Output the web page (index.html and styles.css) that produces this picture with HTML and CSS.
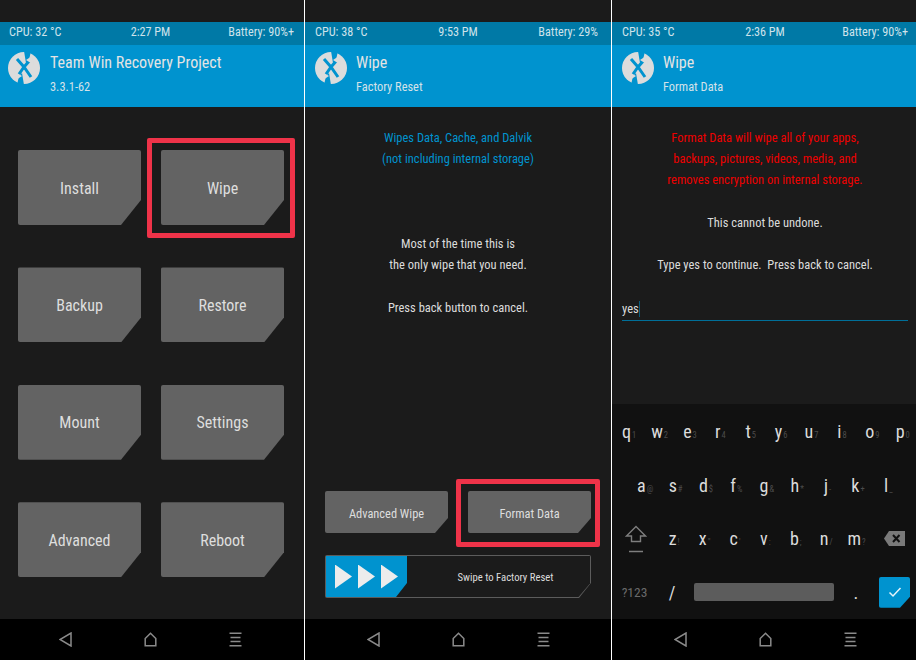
FILE: index.html
```html
<!DOCTYPE html>
<html lang="en">
<head>
  <meta charset="UTF-8" />
  <title>TWRP</title>
  <link rel="stylesheet" href="styles.css">
</head>
<body>
  <div class="screens">

    <section class="panel panel-a">
      <div class="statusbar"><span>CPU: 32 °C</span><span class="clock">2:27 PM</span><span>Battery: 90%+</span></div>
      <header class="titlebar">
        <svg class="logo" viewBox="0 0 32 32"><use href="#twrp"/></svg>
        <div><h1>Team Win Recovery Project</h1><p>3.3.1-62</p></div>
      </header>
      <div class="content main-grid">
        <button class="btn big">Install</button>
        <button class="btn big">Wipe</button>
        <button class="btn big">Backup</button>
        <button class="btn big">Restore</button>
        <button class="btn big">Mount</button>
        <button class="btn big">Settings</button>
        <button class="btn big">Advanced</button>
        <button class="btn big">Reboot</button>
        <div class="mark mark-wipe"></div>
      </div>
      <nav class="navbar">
        <svg viewBox="0 0 13 15"><path d="M12 1V14L1 7.5Z"/></svg>
        <svg viewBox="0 0 13 15"><path d="M1.2 13.8V6.5L6.5 1.2L11.8 6.5V13.8Z"/></svg>
        <svg viewBox="0 0 13 15"><path d="M0.5 1.2H12.5M1.5 5.5H11.5M1.5 9.5H11.5M0.5 13.8H12.5"/></svg>
      </nav>
    </section>

    <section class="panel panel-b">
      <div class="statusbar"><span>CPU: 38 °C</span><span class="clock">9:53 PM</span><span>Battery: 29%</span></div>
      <header class="titlebar">
        <svg class="logo" viewBox="0 0 32 32"><use href="#twrp"/></svg>
        <div><h1>Wipe</h1><p>Factory Reset</p></div>
      </header>
      <div class="content wipe">
        <p class="blue">Wipes Data, Cache, and Dalvik<br>(not including internal storage)</p>
        <p class="gap3">Most of the time this is<br>the only wipe that you need.</p>
        <p class="gap1">Press back button to cancel.</p>
        <div class="wipe-actions">
          <div class="btn-row">
            <button class="btn small">Advanced Wipe</button>
            <button class="btn small">Format Data</button>
          </div>
          <div class="slider">
            <div class="slider-inner">
              <div class="slider-thumb"><i></i><i></i><i></i></div>
              <span>Swipe to Factory Reset</span>
            </div>
          </div>
        </div>
        <div class="mark mark-format"></div>
      </div>
      <nav class="navbar">
        <svg viewBox="0 0 13 15"><path d="M12 1V14L1 7.5Z"/></svg>
        <svg viewBox="0 0 13 15"><path d="M1.2 13.8V6.5L6.5 1.2L11.8 6.5V13.8Z"/></svg>
        <svg viewBox="0 0 13 15"><path d="M0.5 1.2H12.5M1.5 5.5H11.5M1.5 9.5H11.5M0.5 13.8H12.5"/></svg>
      </nav>
    </section>

    <section class="panel panel-c">
      <div class="statusbar"><span>CPU: 35 °C</span><span class="clock">2:36 PM</span><span>Battery: 90%+</span></div>
      <header class="titlebar">
        <svg class="logo" viewBox="0 0 32 32"><use href="#twrp"/></svg>
        <div><h1>Wipe</h1><p>Format Data</p></div>
      </header>
      <div class="content format">
        <p class="red">Format Data will wipe all of your apps,<br>backups, pictures, videos, media, and<br>removes encryption on internal storage.</p>
        <p class="gap1">This cannot be undone.</p>
        <p class="gap1">Type yes to continue.&nbsp; Press back to cancel.</p>
        <div class="field">yes<i class="caret"></i></div>
      </div>
      <div class="keyboard">
        <div class="kb-row top">
          <span class="key">q<sub>1</sub></span><span class="key">w<sub>2</sub></span><span class="key">e<sub>3</sub></span><span class="key">r<sub>4</sub></span><span class="key">t<sub>5</sub></span><span class="key">y<sub>6</sub></span><span class="key">u<sub>7</sub></span><span class="key">i<sub>8</sub></span><span class="key">o<sub>9</sub></span><span class="key">p<sub>0</sub></span>
        </div>
        <div class="kb-row indent">
          <span class="key">a<sub>@</sub></span><span class="key">s<sub>#</sub></span><span class="key">d<sub>$</sub></span><span class="key">f<sub>%</sub></span><span class="key">g<sub>&amp;</sub></span><span class="key">h<sub>*</sub></span><span class="key">j<sub>-</sub></span><span class="key">k<sub>+</sub></span><span class="key">l<sub>_</sub></span>
        </div>
        <div class="kb-row">
          <span class="key side shift-key">
            <svg class="shift" viewBox="0 0 22 28"><path d="M11 1.5L20.5 11H15.5V16.5H6.5V11H1.5Z M4 26.5H18"/></svg>
          </span>
          <span class="key">z<sub>!</sub></span><span class="key">x<sub>"</sub></span><span class="key">c<sub>'</sub></span><span class="key">v<sub>:</sub></span><span class="key">b<sub>;</sub></span><span class="key">n<sub>/</sub></span><span class="key">m<sub>?</sub></span>
          <span class="key side">
            <svg class="bksp" viewBox="0 0 21 15"><path class="bksp-body" d="M5 0H21V15H5L0 7.5Z"/><path class="bksp-x" d="M9 4L15.5 11M15.5 4L9 11"/></svg>
          </span>
        </div>
        <div class="kb-row">
          <span class="key side sym">?123</span>
          <span class="key">/</span>
          <span class="spacebar"></span>
          <span class="key">.</span>
          <span class="enter">
            <svg viewBox="0 0 14 12"><path d="M1.5 6.5L5 10L12.5 2"/></svg>
          </span>
        </div>
      </div>
      <nav class="navbar">
        <svg viewBox="0 0 13 15"><path d="M12 1V14L1 7.5Z"/></svg>
        <svg viewBox="0 0 13 15"><path d="M1.2 13.8V6.5L6.5 1.2L11.8 6.5V13.8Z"/></svg>
        <svg viewBox="0 0 13 15"><path d="M0.5 1.2H12.5M1.5 5.5H11.5M1.5 9.5H11.5M0.5 13.8H12.5"/></svg>
      </nav>
    </section>

  </div>

  <svg class="defs" width="0" height="0">
    <symbol id="twrp" viewBox="0 0 32 32">
      <circle cx="16" cy="16" r="16" fill="#dcdcdc"/>
      <path d="M16 -1H23L21 8L18 11Z M9 33H16L14 21L11 24Z" fill="#0093cf"/>
      <path d="M9 7L16 15L23 25M23 7L16 15L9 25" stroke="#0093cf" stroke-width="3" fill="none"/>
      <path d="M24 4L26 13L18 8Z M8 28L6 19L14 24Z" fill="#dcdcdc"/>
    </symbol>
  </svg>
</body>
</html>
```

FILE: styles.css
```css
* { box-sizing: border-box; }
html, body { margin: 0; height: 100%; }
body {
  background: #fff;
  font-family: Roboto, "Liberation Sans", sans-serif;
  font-stretch: 75%;
  overflow: hidden;
}
.defs { position: absolute; }
.screens {
  display: grid;
  grid-template-columns: 304px 306px 304px;
  column-gap: 1px;
  height: 660px;
  width: 916px;
}
.panel {
  display: flex;
  flex-direction: column;
  background: #1b1b1b;
  padding-top: 22px;
  height: 660px;
  position: relative;
}

.statusbar {
  height: 23px;
  background: #0079a6;
  color: #cfe3eb;
  font-size: 12.2px;
  display: flex;
  align-items: center;
  justify-content: space-between;
  padding: 0 10px 3px 9px;
}
.clock { position: absolute; left: 0; right: 0; text-align: center; }
.panel-a .clock { padding-right: 3px; }
.panel-b .statusbar { padding: 0 13px 3px 10px; }
.panel-c .statusbar { padding: 0 8px 3px 10px; }
.panel-c .clock { padding-left: 2px; }

.titlebar {
  height: 62px;
  background: #0093cf;
  color: #e4e4e4;
  display: flex;
  padding: 7px 0 0 10px;
  gap: 9px;
}
.panel-a .titlebar { padding-left: 8px; gap: 10px; }
.logo { width: 32px; height: 32px; }
.titlebar h1 { font-size: 16px; font-weight: 400; margin: 1px 0 0; line-height: 20px; }
.titlebar p { font-size: 12.4px; margin: 6px 0 0; line-height: 15px; color: #d4e2e9; }

.content { flex: 1; position: relative; }

.btn {
  display: block;
  border: none;
  background: #636363;
  color: #dedede;
  font-family: inherit;
  font-stretch: inherit;
  width: 123px;
  border-radius: 2px;
  padding: 0;
}
.big {
  height: 75px;
  padding-top: 1px;
  font-size: 16px;
  clip-path: polygon(0 0, 100% 0, 100% 50px, 103px 100%, 0 100%);
}
.small {
  height: 42px;
  padding-top: 2px;
  font-size: 12.4px;
  clip-path: polygon(0 0, 100% 0, 100% 27px, 110px 100%, 0 100%);
}

.main-grid {
  display: grid;
  grid-template-columns: 123px 123px;
  grid-auto-rows: 75px;
  column-gap: 20px;
  row-gap: 42.4px;
  padding: 43px 0 0 18px;
}

.mark {
  position: absolute;
  border: 5px solid #ef3349;
  border-radius: 2px;
}
.mark-wipe { left: 147px; top: 31px; width: 148px; height: 100px; }
.mark-format { left: 151px; top: 372px; width: 144px; height: 68px; }

.wipe, .format {
  font-size: 12.5px;
  line-height: 21.3px;
  color: #dcdcdc;
  text-align: center;
  padding-top: 19.5px;
}
.wipe p, .format p { margin: 0; }
.blue { color: #0093cf; }
.red { color: #ee0000; }
.gap1 { padding-top: 21.3px; }
.gap3 { padding-top: 63.9px; }

.wipe-actions {
  position: absolute;
  left: 20px;
  top: 384px;
  width: 266px;
}
.btn-row { display: flex; gap: 20px; }
.slider {
  margin-top: 22px;
  height: 43px;
  background: #5c5c5c;
  border-radius: 2px;
  clip-path: polygon(0 0, 100% 0, 100% 28px, 254px 100%, 0 100%);
  padding: 1px;
}
.slider-inner {
  height: 100%;
  background: #1b1b1b;
  clip-path: polygon(0 0, 100% 0, 100% 27.5px, 252.5px 100%, 0 100%);
  display: flex;
  align-items: center;
  position: relative;
}
.slider-thumb {
  width: 81px;
  height: 100%;
  background: #0093cf;
  clip-path: polygon(0 0, 100% 0, 100% 27px, 70px 100%, 0 100%);
  display: flex;
  align-items: center;
  gap: 6px;
  padding: 0 0 0 9px;
}
.slider-thumb i {
  width: 17px;
  height: 24px;
  background: #ececec;
  clip-path: polygon(0 0, 100% 50%, 0 100%);
}
.slider-inner span {
  flex: 1;
  font-size: 10.7px;
  padding-top: 2px;
  color: #dcdcdc;
  text-align: center;
  padding-left: 14px;
}

.format { padding-left: 10px; padding-right: 8px; }
.field {
  margin-top: 21.2px;
  text-align: left;
  height: 24px;
  border-bottom: 1px solid #006f99;
  line-height: 24px;
  display: flex;
}
.caret { width: 1px; height: 16px; margin-top: 4px; background: #0a5c7c; }

.keyboard {
  height: 215px;
  background: #111;
  padding-top: 1px;
  color: #dcdcdc;
}
.kb-row { height: 53.5px; display: flex; align-items: center; }
.top { padding-left: 2px; }
.indent { padding-left: 18px; }
.key {
  width: 30.4px;
  flex: none;
  font-size: 18px;
  text-align: center;
  display: flex;
  justify-content: center;
  align-items: baseline;
}
.key sub {
  font-size: 8.5px;
  color: #4c4c4c;
  margin-left: 1px;
  vertical-align: baseline;
  line-height: 1;
}
.side { width: 45px; }
.shift-key { width: 47px; }
.shift { width: 22px; height: 28px; fill: none; stroke: #7e7e7e; stroke-width: 1.4; }
.bksp { width: 21px; height: 15px; margin-left: 1px; }
.bksp-body { fill: #7a7a7a; }
.bksp-x { stroke: #111; stroke-width: 2; }
.key.sym { font-size: 13.5px; color: #6a6a6a; }
.spacebar {
  flex: 1;
  height: 18px;
  margin: 0 7px;
  background: #5c5c5c;
  border-radius: 2px;
}
.enter {
  width: 31px;
  height: 31px;
  margin: 0 6px 0 8px;
  background: #0093cf;
  border-radius: 2px;
  clip-path: polygon(0 0, 100% 0, 100% 20px, 21px 100%, 0 100%);
  display: flex;
  align-items: center;
  justify-content: center;
}
.enter svg { width: 14px; height: 12px; fill: none; stroke: #e6f4fa; stroke-width: 1.5; }

.navbar {
  height: 41px;
  background: #000;
  display: flex;
  align-items: center;
  justify-content: center;
  gap: 72px;
}
.panel-a .navbar { padding-right: 3px; }
.panel-c .navbar { padding-left: 2px; }
.navbar svg {
  width: 13px;
  height: 15px;
  fill: none;
  stroke: #8a8a8a;
  stroke-width: 1.5;
}
```
